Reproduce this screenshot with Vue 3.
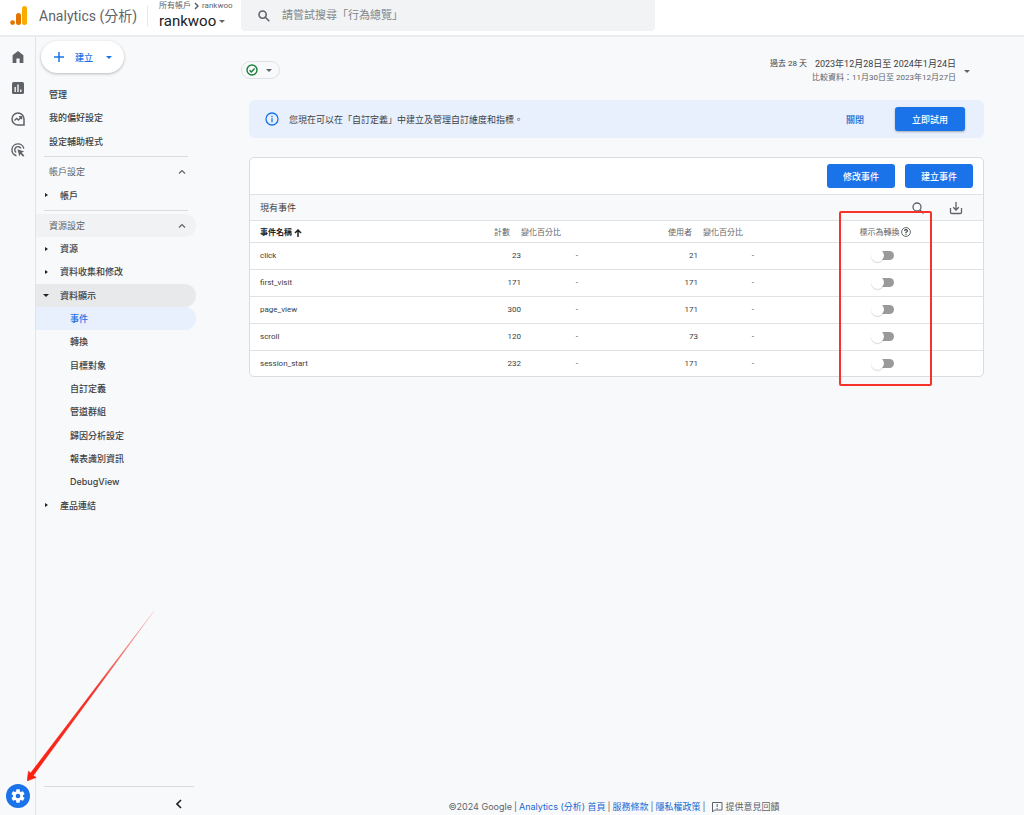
<script setup>
import { ref } from 'vue'

const topLinks = ['管理', '我的偏好設定', '設定輔助程式']

const propertyItems = [
  { label: '資源', kind: 'closed' },
  { label: '資料收集和修改', kind: 'closed' },
  { label: '資料顯示', kind: 'open' },
  { label: '事件', kind: 'sub', active: true },
  { label: '轉換', kind: 'sub' },
  { label: '目標對象', kind: 'sub' },
  { label: '自訂定義', kind: 'sub' },
  { label: '管道群組', kind: 'sub' },
  { label: '歸因分析設定', kind: 'sub' },
  { label: '報表識別資訊', kind: 'sub' },
  { label: 'DebugView', kind: 'sub' },
  { label: '產品連結', kind: 'closed' },
]

const events = ref([
  { name: 'click', count: 23, users: 21, on: false },
  { name: 'first_visit', count: 171, users: 171, on: false },
  { name: 'page_view', count: 300, users: 171, on: false },
  { name: 'scroll', count: 120, users: 73, on: false },
  { name: 'session_start', count: 232, users: 171, on: false },
])
const query = ref('')
</script>

<template>
  <div class="page">
    <header class="topbar">
      <svg class="logo" viewBox="0 0 18 20" aria-hidden="true">
        <rect x="12" y="0" width="5" height="19" rx="2.5" fill="#f9ab00" />
        <rect x="6" y="7" width="5" height="12" rx="2.5" fill="#e37400" />
        <circle cx="2.6" cy="16.6" r="2.4" fill="#e37400" />
      </svg>
      <h1 class="product">Analytics (分析)</h1>
      <div class="account">
        <div class="crumbs">
          <span>所有帳戶</span>
          <svg viewBox="0 0 5 8" aria-hidden="true"><path d="M1 1l3 3-3 3" /></svg>
          <span>rankwoo</span>
        </div>
        <button class="property" type="button">rankwoo<i class="caret"></i></button>
      </div>
      <label class="search">
        <svg viewBox="0 0 12 12" aria-hidden="true"><circle cx="4.6" cy="4.6" r="3.6" /><path d="M7.3 7.3l4 4" /></svg>
        <input v-model="query" type="search" aria-label="搜尋" placeholder="請嘗試搜尋「行為總覽」" />
      </label>
    </header>

    <div class="body">
      <nav class="rail" aria-label="主選單">
        <a href="#" aria-label="首頁">
          <svg viewBox="0 0 14 14"><path d="M7 1L1.6 5.2V13h3.8V8.6h3.2V13h3.8V5.2z" fill="#5f6368" /></svg>
        </a>
        <a href="#" aria-label="報表">
          <svg viewBox="0 0 14 14"><rect x="1" y="1" width="12" height="12" rx="1.5" fill="#5f6368" /><path d="M4.2 6v5M7 3.5V11M9.8 8.4V11" stroke="#fff" stroke-width="1.3" /></svg>
        </a>
        <a href="#" aria-label="探索">
          <svg viewBox="0 0 14 14" fill="none" stroke="#5f6368"><path d="M13 7a6 6 0 1 0-6 6h6z" stroke-width="1.5" /><path d="M3.4 8.6l2.3-2.2 1.7 1.6 3-3M8 4.6h2.6v2.6" stroke-width="1.4" /></svg>
        </a>
        <a href="#" aria-label="廣告">
          <svg viewBox="0 0 14 14" fill="none" stroke="#5f6368" stroke-width="1.4"><path d="M5.4 12.7A6 6 0 1 1 12.8 5.6" /><path d="M5.2 9.5A3.2 3.2 0 1 1 9.9 5.6" /><path d="M6.4 6.2l6.8 2.4-2.6 1.2 2.8 2.8-1.2 1.2-2.8-2.8-1 2.4z" fill="#5f6368" stroke="none" /></svg>
        </a>
        <a class="gear" href="#" aria-label="管理">
          <svg viewBox="0 0 24 24"><path fill="#fff" d="M19.43 12.98c.04-.32.07-.64.07-.98s-.03-.66-.07-.98l2.11-1.65a.5.5 0 0 0 .12-.64l-2-3.46a.5.5 0 0 0-.61-.22l-2.49 1a7.3 7.3 0 0 0-1.69-.98l-.38-2.65A.49.49 0 0 0 14 2h-4a.49.49 0 0 0-.49.42l-.38 2.65c-.61.25-1.17.59-1.69.98l-2.49-1a.49.49 0 0 0-.61.22l-2 3.46a.49.49 0 0 0 .12.64l2.11 1.65c-.04.32-.07.65-.07.98s.03.66.07.98l-2.11 1.65a.5.5 0 0 0-.12.64l2 3.46c.12.22.39.3.61.22l2.49-1c.52.4 1.08.73 1.69.98l.38 2.65c.03.24.24.42.49.42h4c.25 0 .46-.18.49-.42l.38-2.65a7.3 7.3 0 0 0 1.69-.98l2.49 1c.23.09.49 0 .61-.22l2-3.46a.5.5 0 0 0-.12-.64zM12 15.500a3.500 3.500 0 1 1 0-7 3.500 3.500 0 0 1 0 7z" /></svg>
        </a>
      </nav>

      <aside class="side">
        <button class="create" type="button">
          <svg viewBox="0 0 12 12" aria-hidden="true"><path d="M6 1v10M1 6h10" /></svg>
          <span>建立</span>
          <i class="caret"></i>
        </button>
        <ul class="list top">
          <li v-for="t in topLinks" :key="t"><a href="#">{{ t }}</a></li>
        </ul>
        <hr />
        <button class="section" type="button">帳戶設定
          <svg viewBox="0 0 8 6" aria-hidden="true"><path d="M1 4.500l3-3 3 3" /></svg>
        </button>
        <ul class="list account-list">
          <li><a class="closed" href="#">帳戶</a></li>
        </ul>
        <hr />
        <button class="section shaded" type="button">資源設定
          <svg viewBox="0 0 8 6" aria-hidden="true"><path d="M1 4.500l3-3 3 3" /></svg>
        </button>
        <ul class="list property-list">
          <li v-for="p in propertyItems" :key="p.label">
            <a href="#" :class="[p.kind, { active: p.active }]">{{ p.label }}</a>
          </li>
        </ul>
        <div class="side-foot">
          <button type="button" aria-label="收合">
            <svg viewBox="0 0 6 10"><path d="M5 1L1 5l4 4" /></svg>
          </button>
        </div>
      </aside>

      <main class="main">
        <div class="meta">
          <button class="status" type="button" aria-label="狀態">
            <svg viewBox="0 0 12 12"><circle cx="6" cy="6" r="5" /><path d="M3.500 6.200l1.800 1.700 3.300-3.500" /></svg>
            <i class="caret"></i>
          </button>
          <button class="dates" type="button">
            <span class="preset">過去 28 天</span>
            <span class="range">
              <span class="current">2023年12月28日至 2024年1月24日</span>
              <span class="compare">比較資料：11月30日至 2023年12月27日</span>
            </span>
            <i class="caret"></i>
          </button>
        </div>

        <section class="banner">
          <svg viewBox="0 0 14 14" aria-hidden="true"><circle cx="7" cy="7" r="6" /><path d="M7 6.200v4M7 3.700v1.500" /></svg>
          <p>您現在可以在「自訂定義」中建立及管理自訂維度和指標。</p>
          <button class="dismiss" type="button">關閉</button>
          <button class="primary" type="button">立即試用</button>
        </section>

        <section class="card">
          <div class="actions">
            <button class="primary" type="button">修改事件</button>
            <button class="primary" type="button">建立事件</button>
          </div>
          <div class="caption">
            <h2>現有事件</h2>
            <button type="button" aria-label="搜尋事件">
              <svg viewBox="0 0 14 14"><circle cx="6" cy="6" r="4" /><path d="M9 9l3.500 3.500" /></svg>
            </button>
            <button type="button" aria-label="下載">
              <svg viewBox="0 0 14 14"><path d="M1.500 7v4.200q0 1.300 1.300 1.300h8.400q1.300 0 1.300-1.300V7M7 1v8M4.200 6.300L7 9l2.800-2.700" /></svg>
            </button>
          </div>
          <table>
            <colgroup>
              <col /><col class="c-count" /><col class="c-change" /><col class="c-users" />
              <col class="c-change2" /><col class="c-mark" /><col class="c-end" />
            </colgroup>
            <thead>
              <tr>
                <th class="name">事件名稱
                  <svg viewBox="0 0 8 8" aria-hidden="true"><path d="M4 8V1M1 4l3-3 3 3" /></svg>
                </th>
                <th class="num count">計數</th>
                <th class="chg">變化百分比</th>
                <th class="num users">使用者</th>
                <th class="chg second">變化百分比</th>
                <th class="mark"><span>標示為轉換
                  <svg viewBox="0 0 10 10" aria-hidden="true"><circle cx="5" cy="5" r="4.400" /><path class="q" d="M3.600 4.100q0-1.400 1.400-1.400T6.400 3.900Q6.400 4.600 5 5.300v.7M5 6.800v1" /></svg></span>
                </th>
                <th></th>
              </tr>
            </thead>
            <tbody>
              <tr v-for="e in events" :key="e.name">
                <td class="name">{{ e.name }}</td>
                <td class="num">{{ e.count }}</td>
                <td class="num dash">-</td>
                <td class="num">{{ e.users }}</td>
                <td class="num dash second">-</td>
                <td class="mark"><input v-model="e.on" type="checkbox" role="switch" :aria-label="'標示為轉換 ' + e.name" /></td>
                <td></td>
              </tr>
            </tbody>
          </table>
          <div class="highlight"></div>
        </section>

        <footer class="foot">
          <span>©2024 Google</span><span>|</span>
          <a href="#">Analytics (分析) 首頁</a><span>|</span>
          <a href="#">服務條款</a><span>|</span>
          <a href="#">隱私權政策</a><span>|</span>
          <button type="button">
            <svg viewBox="0 0 12 12" aria-hidden="true"><path d="M1.500 11V1.500h9.500v7.500H3.500zM6.200 3v3M6.200 7v1" /></svg>提供意見回饋
          </button>
        </footer>
      </main>

      <svg class="pointer" viewBox="0 0 128 170" aria-hidden="true">
        <defs>
          <linearGradient id="fade" x1="0" y1="1" x2="1" y2="0">
            <stop offset="0" stop-color="#fb1d10" />
            <stop offset="0.550" stop-color="#f0352c" />
            <stop offset="1" stop-color="#f0352c" stop-opacity="0.150" />
          </linearGradient>
        </defs>
        <path d="M0 170L1.500 160 3.600 162 127 0 6.400 164.400 9.200 166.500z" fill="url(#fade)" stroke="url(#fade)" stroke-width="0.500" />
      </svg>
    </div>
  </div>
</template>

<style>
body {
  background: #f8f9fb;
}
</style>

<style scoped>
.page {
  display: flex;
  flex-direction: column;
  min-height: 100vh;
  font-family: Roboto, "Noto Sans CJK TC", sans-serif;
  font-size: 9px;
  color: #3c4043;
}
button {
  border: 0;
  padding: 0;
  background: none;
  font: inherit;
  color: inherit;
}
a {
  color: inherit;
  text-decoration: none;
}
svg {
  flex: none;
  display: block;
}
.caret {
  flex: none;
  border: 3px solid transparent;
  border-top-color: currentColor;
  border-bottom: 0;
}
.topbar {
  display: flex;
  box-sizing: border-box;
  height: 37px;
  padding-left: 10px;
  background: #fff;
  border-bottom: 2px solid #ebecee;
}
.logo {
  width: 18px;
  height: 20px;
  margin-top: 6px;
}
.product {
  margin: 0 0 0 11px;
  width: 108px;
  font-size: 14px;
  font-weight: 400;
  line-height: 32px;
  color: #5f6368;
  white-space: nowrap;
}
.account {
  width: 82px;
  height: 20px;
  margin-top: 6px;
  padding-left: 11px;
  border-left: 1px solid #e4e6e8;
}
.crumbs {
  display: flex;
  align-items: center;
  gap: 3px;
  margin-top: -6px;
  font-size: 8px;
  line-height: 12px;
  white-space: nowrap;
  color: #5f6368;
}
.crumbs svg {
  width: 5px;
  height: 8px;
  fill: none;
  stroke: #5f6368;
  stroke-width: 1.500;
}
.property {
  display: flex;
  align-items: center;
  gap: 3px;
  font-size: 15px;
  line-height: 18px;
  color: #202124;
}
.property .caret {
  color: #5f6368;
}
.search {
  display: flex;
  align-items: center;
  box-sizing: border-box;
  flex: 0 1 414px;
  height: 31px;
  padding: 0 17px;
  gap: 12px;
  background: #f1f3f4;
  border-radius: 0 0 4px 4px;
}
.search svg {
  width: 12px;
  height: 12px;
  fill: none;
  stroke: #5f6368;
  stroke-width: 1.600;
}
.search input {
  flex: 1;
  min-width: 0;
  padding: 0;
  border: 0;
  outline: 0;
  background: none;
  font: inherit;
  font-size: 11px;
}
.search input::placeholder {
  color: #80868b;
}
.body {
  position: relative;
  display: flex;
  flex: 1;
}
.rail {
  display: flex;
  flex-direction: column;
  align-items: center;
  box-sizing: border-box;
  width: 36px;
  padding: 13px 0 7px;
  gap: 17px;
  border-right: 1px solid #e1e3e6;
}
.rail svg {
  width: 14px;
  height: 14px;
}
.rail .gear {
  display: flex;
  align-items: center;
  justify-content: center;
  width: 24px;
  height: 24px;
  margin-top: auto;
  border-radius: 50%;
  background: #1a73e8;
}
.gear svg {
  width: 16px;
  height: 16px;
}
.side {
  display: flex;
  flex-direction: column;
  width: 160px;
}
.create {
  display: flex;
  align-items: center;
  box-sizing: border-box;
  width: 83px;
  height: 32px;
  margin: 4px 0 10px 5px;
  padding: 0 12px;
  border-radius: 16px;
  background: #fff;
  color: #1a73e8;
  font-weight: 500;
  box-shadow: 0 1px 3px rgba(60, 64, 67, 0.350);
}
.create svg {
  width: 12px;
  height: 12px;
  stroke: #1a73e8;
  stroke-width: 1.500;
}
.create span {
  margin: 0 auto 0 10px;
}
.list {
  display: grid;
  grid-auto-rows: 1fr;
  margin: 0;
  padding: 0;
  list-style: none;
  font-family: Inter, "Noto Sans CJK TC", sans-serif;
  font-weight: 500;
}
.top {
  min-height: 70px;
}
.account-list {
  min-height: 24px;
}
.property-list {
  min-height: 280px;
}
.list a {
  position: relative;
  display: flex;
  align-items: center;
  height: 100%;
  padding-left: 13px;
  border-radius: 0 12px 12px 0;
}
.list .closed,
.list .open {
  padding-left: 24px;
}
.list .sub {
  padding-left: 34px;
}
.list .open {
  background: #e8e9eb;
}
.list .active {
  background: #e8f0fe;
  color: #1a73e8;
}
.closed::before,
.open::before {
  content: "";
  position: absolute;
  left: 9px;
  border: 2px solid transparent;
  border-left: 3px solid #202124;
  border-right: 0;
}
.open::before {
  left: 7px;
  border: 3px solid transparent;
  border-top-color: #202124;
  border-bottom: 0;
}
hr {
  width: 144px;
  margin: 3px 0 3px 8px;
  border: 0;
  border-top: 1px solid #dadce0;
}
.section {
  display: flex;
  align-items: center;
  justify-content: space-between;
  height: 23px;
  padding: 0 10px 0 13px;
  border-radius: 0 12px 12px 0;
  color: #5f6368;
}
.shaded {
  background: #f1f2f4;
}
.section svg {
  width: 8px;
  height: 6px;
  fill: none;
  stroke: #5f6368;
  stroke-width: 1.200;
}
.side-foot {
  display: flex;
  justify-content: flex-end;
  height: 28px;
  margin: auto 2px 0 8px;
  padding-right: 12px;
  border-top: 1px solid #dadce0;
}
.side-foot button {
  height: 34px;
}
.side-foot svg {
  width: 6px;
  height: 10px;
  fill: none;
  stroke: #202124;
  stroke-width: 1.600;
}
.main {
  display: flex;
  flex-direction: column;
  flex: 1;
  min-width: 0;
  padding: 0 40px 0 53px;
}
.meta {
  display: flex;
  justify-content: space-between;
  height: 63px;
}
.status {
  display: flex;
  align-items: center;
  justify-content: space-between;
  box-sizing: border-box;
  width: 39px;
  height: 18px;
  margin: 24px 0 0 -8px;
  padding: 0 7px 0 4px;
  border: 1px solid #dfe1e5;
  border-radius: 9px;
  color: #5f6368;
}
.status svg {
  width: 12px;
  height: 12px;
  fill: none;
  stroke: #188038;
  stroke-width: 1.400;
}
.dates {
  display: flex;
  align-items: center;
  gap: 8px;
  height: 28px;
  margin-top: 20px;
  padding-right: 14px;
}
.preset {
  align-self: flex-start;
  margin-right: -3px;
  font-size: 8px;
  line-height: 14px;
}
.range {
  display: flex;
  flex-direction: column;
  align-items: flex-end;
  line-height: 14px;
  white-space: nowrap;
}
.compare {
  font-size: 8px;
  color: #5f6368;
}
.dates .caret {
  color: #5f6368;
}
.banner {
  display: flex;
  align-items: center;
  height: 38px;
  margin-bottom: 19px;
  padding: 0 19px 0 16px;
  border-radius: 6px;
  background: #e8f0fe;
}
.banner svg {
  width: 14px;
  height: 14px;
  margin-right: 10px;
  fill: none;
  stroke: #1a73e8;
  stroke-width: 1.300;
}
.banner p {
  margin: 0;
  flex: 1;
}
.dismiss {
  margin-right: 31px;
  color: #1967d2;
  font-weight: 500;
}
.primary {
  width: 68px;
  height: 24px;
  border-radius: 3px;
  background: #1a73e8;
  color: #fff;
  font-weight: 500;
}
.banner .primary {
  width: 70px;
  box-shadow: 0 1px 2px rgba(60, 64, 67, 0.400);
}
.card {
  position: relative;
  border: 1px solid #dadce0;
  border-radius: 5px;
  background: #fff;
}
.actions {
  display: flex;
  align-items: center;
  justify-content: flex-end;
  gap: 10px;
  height: 36px;
  padding-right: 10px;
}
.caption {
  display: flex;
  align-items: center;
  box-sizing: border-box;
  height: 27px;
  padding: 0 20px 0 10px;
  gap: 24px;
  border: 1px solid #e0e2e5;
  border-width: 1px 0;
  background: #f8f9fa;
}
.caption h2 {
  flex: 1;
  margin: 0;
  font-size: 9px;
  font-weight: 400;
}
.caption svg {
  width: 14px;
  height: 14px;
  fill: none;
  stroke: #5f6368;
  stroke-width: 1.300;
}
table {
  width: 100%;
  height: 155px;
  table-layout: fixed;
  border-collapse: collapse;
  font-size: 8px;
}
.c-count { width: 60px; }
.c-change { width: 57px; }
.c-users { width: 120px; }
.c-change2 { width: 141px; }
.c-mark { width: 92px; }
.c-end { width: 52px; }
th,
td {
  padding: 0;
  text-align: left;
  white-space: nowrap;
}
th {
  height: 21px;
  font-weight: 400;
  color: #5f6368;
}
tbody tr {
  border-top: 1px solid #e0e2e5;
}
.name {
  padding-left: 10px;
}
th.name {
  font-weight: 700;
  color: #202124;
}
th.name svg {
  display: inline-block;
  width: 8px;
  height: 8px;
  vertical-align: middle;
  fill: none;
  stroke: #202124;
  stroke-width: 1.500;
}
.num {
  text-align: right;
}
th.count {
  padding-right: 11px;
}
th.users {
  padding-right: 6px;
}
th.second {
  padding-left: 5px;
}
.dash.second {
  padding-right: 85px;
}
.mark {
  text-align: center;
}
.mark span {
  display: flex;
  align-items: center;
  justify-content: center;
  gap: 1px;
}
.mark svg {
  width: 10px;
  height: 10px;
  fill: none;
  stroke: #3c4043;
  stroke-width: 0.800;
}
.mark .q {
  stroke-width: 1.200;
}
.mark input {
  position: relative;
  appearance: none;
  display: block;
  width: 18px;
  height: 9px;
  margin: 0 auto;
  border-radius: 5px;
  background: #9a9a9a;
}
.mark input::before {
  content: "";
  position: absolute;
  top: -2px;
  left: -5px;
  width: 13px;
  height: 13px;
  border-radius: 50%;
  background: #fff;
  box-shadow: 0 1px 1px rgba(0, 0, 0, 0.160);
}
.mark input:checked::before {
  left: 10px;
}
.highlight {
  position: absolute;
  top: 53px;
  right: 51px;
  box-sizing: border-box;
  width: 93px;
  height: 175px;
  border: 2px solid #f5332a;
  border-radius: 2px;
  pointer-events: none;
}
.foot {
  display: flex;
  align-items: center;
  justify-content: center;
  gap: 2px;
  height: 17px;
  margin-top: auto;
  padding-right: 5px;
  white-space: nowrap;
  font-family: Inter, "Noto Sans CJK TC", sans-serif;
  color: #5f6368;
}
.foot a {
  color: #1967d2;
}
.foot button {
  display: flex;
  align-items: center;
  gap: 3px;
  padding-left: 3px;
}
.foot svg {
  width: 12px;
  height: 12px;
  fill: none;
  stroke: #5f6368;
}
.pointer {
  position: absolute;
  left: 27px;
  bottom: 34px;
  width: 128px;
  height: 170px;
  pointer-events: none;
}
</style>
